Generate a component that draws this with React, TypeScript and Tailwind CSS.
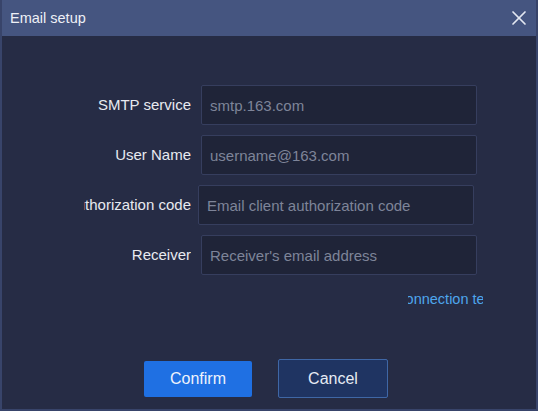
import { X } from "lucide-react";

const fields = [
  { label: "SMTP service", placeholder: "smtp.163.com", gap: "mr-[10px]" },
  { label: "User Name", placeholder: "username@163.com", gap: "mr-[10px]" },
  { label: "Authorization code", placeholder: "Email client authorization code", gap: "mr-[7px]" },
  { label: "Receiver", placeholder: "Receiver's email address", gap: "mr-[10px]" },
];

export default function App() {
  return (
    <div
      className="w-[538px] h-[411px] flex flex-col bg-[#262c45] border-x-2 border-b-2 border-[#38446a] overflow-hidden"
      style={{ fontFamily: '"Liberation Sans", Arial, sans-serif' }}
    >
      {/* Title bar */}
      <div className="h-[36px] -mx-[2px] flex items-center justify-between bg-[#455580] pl-[10px] pr-[7px] shrink-0">
        <span className="text-[14.5px] text-[#eef0f6] pt-[1px]">Email setup</span>
        <X className="w-[24px] h-[24px] text-[#e3e7f1]" strokeWidth={1.7} />
      </div>

      {/* Form */}
      <div className="flex flex-col gap-[10px] pt-[49px] pl-[82px]">
        {fields.map((f) => (
          <div key={f.label} className="flex items-center h-[40px]">
            <div className={`w-[107px] flex justify-end overflow-hidden whitespace-nowrap ${f.gap}`}>
              <span className="text-[15px] text-[#e8eaf0] shrink-0">{f.label}</span>
            </div>
            <input
              className="w-[276px] h-[40px] bg-[#1f2438] border border-[#363e5e] rounded-[2px] px-[8px] text-[15px] text-[#dde1ea] placeholder:text-[#7e8499] outline-none"
              placeholder={f.placeholder}
            />
          </div>
        ))}
      </div>

      {/* Connection test link */}
      <div className="mt-[14px] pl-[406px]">
        <div className="w-[75px] h-[18px] flex justify-center overflow-hidden whitespace-nowrap">
          <span className="text-[14.5px] text-[#4ea6ec] shrink-0 cursor-pointer">Connection test</span>
        </div>
      </div>

      {/* Actions */}
      <div className="mt-[52px] pl-[142px] flex items-center gap-[26px]">
        <button className="w-[108px] h-[36px] bg-[#1f70e3] rounded-[2px] text-[16px] text-[#eef3fc]">
          Confirm
        </button>
        <button className="w-[110px] h-[39px] bg-[#1f3462] border border-[#3f67a6] rounded-[2px] text-[16px] text-[#e6ebf4]">
          Cancel
        </button>
      </div>
    </div>
  );
}
